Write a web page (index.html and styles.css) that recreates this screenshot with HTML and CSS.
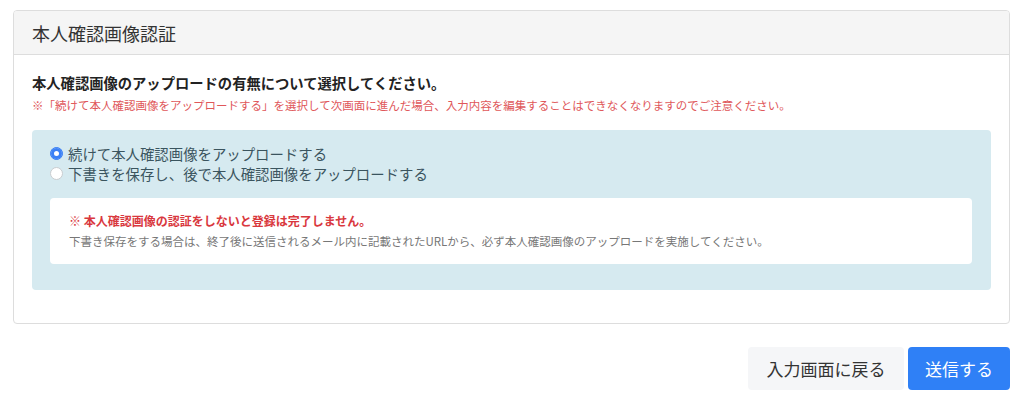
FILE: index.html
```html
<!DOCTYPE html>
<html lang="ja">

<head>
    <meta charset="UTF-8">
    <meta name="viewport" content="width=device-width, initial-scale=1.0">
    <title>本人確認画像認証</title>
    <link rel="stylesheet" href="styles.css">
</head>

<body>
    <main class="page">
        <section class="card">
            <div class="card-header">本人確認画像認証</div>
            <div class="card-body">
                <p class="lead">本人確認画像のアップロードの有無について選択してください。</p>
                <p class="note">※「続けて本人確認画像をアップロードする」を選択して次画面に進んだ場合、入力内容を編集することはできなくなりますのでご注意ください。</p>

                <div class="choice-panel">
                    <label class="choice">
                        <input type="radio" name="upload" value="now" checked>
                        <span>続けて本人確認画像をアップロードする</span>
                    </label>
                    <label class="choice">
                        <input type="radio" name="upload" value="later">
                        <span>下書きを保存し、後で本人確認画像をアップロードする</span>
                    </label>

                    <div class="info-box">
                        <p class="info-warn">※ 本人確認画像の認証をしないと登録は完了しません。</p>
                        <p class="info-text">下書き保存をする場合は、終了後に送信されるメール内に記載されたURLから、必ず本人確認画像のアップロードを実施してください。</p>
                    </div>
                </div>
            </div>
        </section>

        <div class="actions">
            <button type="button" class="btn btn-light">入力画面に戻る</button>
            <button type="submit" class="btn btn-primary">送信する</button>
        </div>
    </main>
</body>

</html>
```

FILE: styles.css
```css
* {
    box-sizing: border-box;
    margin: 0;
    padding: 0;
}

body {
    background: #fff;
    color: #333;
    font-family: "Noto Sans CJK JP", "Noto Sans", sans-serif;
}

.page {
    padding: 10px 14px 0 13px;
}

.card {
    border: 1px solid #ddd;
    border-radius: 4px;
    overflow: hidden;
}

.card-header {
    height: 44px;
    padding: 0 18px;
    display: flex;
    align-items: center;
    background: #f5f5f5;
    border-bottom: 1px solid #ddd;
    font-size: 18px;
    color: #333;
}

.card-body {
    padding: 18px 18px 33px;
}

.lead {
    font-size: 14.3px;
    font-weight: bold;
    line-height: 20px;
    color: #222;
}

.note {
    margin-top: 4px;
    font-size: 11.5px;
    line-height: 16px;
    color: #e0575a;
}

.choice-panel {
    margin-top: 17px;
    padding: 13px 19px 26px 18px;
    background: #d6eaf0;
    border-radius: 4px;
}

.choice {
    display: flex;
    align-items: center;
    height: 20px;
    font-size: 14.4px;
    color: #3a545e;
}

.choice input {
    appearance: none;
    width: 13px;
    height: 13px;
    margin: 0 5px 0 0;
    border: 1px solid #c9cdd0;
    border-radius: 50%;
    background: #fff;
}

.choice input:checked {
    border-color: #3a80f5;
    background: #3a80f5;
    box-shadow: inset 0 0 0 3px #3a80f5, inset 0 0 0 6px #fff;
}

.info-box {
    margin-top: 15px;
    padding: 14px 19px 14px;
    background: #fff;
    border-radius: 4px;
}

.info-warn {
    font-size: 12px;
    font-weight: bold;
    line-height: 18px;
    color: #d9383e;
}

.info-text {
    margin-top: 2px;
    font-size: 11.5px;
    line-height: 18px;
    color: #777;
}

.actions {
    display: flex;
    justify-content: flex-end;
    gap: 4px;
    margin-top: 23px;
}

.btn {
    height: 43px;
    padding: 0 17px;
    border: none;
    border-radius: 4px;
    font-family: inherit;
    font-size: 17px;
}

.btn-light {
    padding: 0 18.5px;
    background: #f5f6f8;
    color: #333;
}

.btn-primary {
    background: #2f80f6;
    color: #fff;
}
```
